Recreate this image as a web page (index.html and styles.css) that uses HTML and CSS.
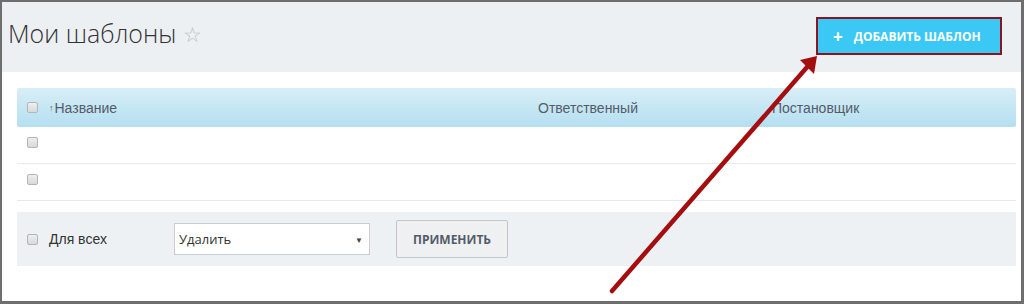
FILE: index.html
```html
<!DOCTYPE html>
<html lang="ru">

<head>
    <meta charset="UTF-8">
    <title>Мои шаблоны</title>
    <link rel="stylesheet" href="styles.css">
</head>

<body>
    <div class="frame">
        <header class="page-header">
            <h1 class="page-title">Мои шаблоны <span class="star">☆</span></h1>
            <button class="add-btn"><span class="plus">+</span>ДОБАВИТЬ ШАБЛОН</button>
        </header>

        <div class="content">
            <div class="grid">
                <div class="grid-head">
                    <div class="col col-name">
                        <input type="checkbox" class="chk">
                        <span class="sort">↑</span>Название
                    </div>
                    <div class="col col-resp">Ответственный</div>
                    <div class="col col-author">Постановщик</div>
                </div>
                <div class="grid-row">
                    <div class="col col-name"><input type="checkbox" class="chk"></div>
                </div>
                <div class="grid-row">
                    <div class="col col-name"><input type="checkbox" class="chk"></div>
                </div>
            </div>

            <div class="actions">
                <label class="for-all"><input type="checkbox" class="chk">Для всех</label>
                <div class="select">
                    <span>Удалить</span>
                    <span class="caret">▼</span>
                </div>
                <button class="apply-btn">ПРИМЕНИТЬ</button>
            </div>
        </div>

        <!-- стрелка поверх страницы -->
        <svg class="arrow" width="1024" height="304" viewBox="0 0 1024 304">
            <line x1="612" y1="291" x2="808" y2="66" stroke="#a50e0e" stroke-width="4.5" stroke-linecap="round" />
            <polygon points="817,56 800,60 814,74" fill="#a50e0e" />
        </svg>
    </div>
</body>

</html>
```

FILE: styles.css
```css
body,
html {
    margin: 0;
    padding: 0;
    background: #ffffff;
}

.frame {
    position: relative;
    width: 1024px;
    height: 304px;
    box-sizing: border-box;
    border: 2px solid #6e6e6e;
    border-right-width: 3px;
    border-bottom-width: 3px;
    overflow: hidden;
    font-family: "Liberation Sans", Arial, sans-serif;
}

.page-header {
    display: flex;
    justify-content: space-between;
    align-items: flex-start;
    height: 70px;
    box-sizing: border-box;
    padding: 11px 19px 0 6px;
    background-color: #edf0f3;
}

.page-title {
    margin: 0;
    font-family: "Open Sans", sans-serif;
    font-weight: 300;
    font-size: 25px;
    line-height: 40px;
    color: #333333;
}

.star {
    font-family: "DejaVu Sans", sans-serif;
    font-size: 21px;
    color: #b9bec2;
    vertical-align: 1px;
}

.add-btn {
    margin-top: 4px;
    width: 186px;
    height: 38px;
    box-sizing: border-box;
    border: 2px solid #8a1422;
    background-color: #3bc8f5;
    color: #ffffff;
    font-family: "Open Sans", sans-serif;
    font-weight: 700;
    font-size: 12px;
    padding: 0 0 0 15px;
    text-align: left;
    cursor: pointer;
}

.plus {
    font-size: 17px;
    font-weight: 700;
    margin-right: 11px;
    vertical-align: -2px;
}

.content {
    padding: 16px 5px 0 15px;
}

.grid-head,
.grid-row {
    display: flex;
    align-items: center;
    font-size: 14px;
    color: #535c69;
}

.grid-head {
    height: 39px;
    border-radius: 2px;
    background: linear-gradient(to bottom, #d8eef7, #b4dff0);
}

.grid-row {
    height: 36px;
    border-bottom: 1px solid #e7e9eb;
}

.col-name {
    display: flex;
    align-items: center;
    width: 521px;
    padding-left: 10px;
    box-sizing: border-box;
}

.col-resp {
    width: 234px;
}

.sort {
    font-size: 9px;
    margin: 0 1px 0 11px;
    vertical-align: 3px;
}

.chk {
    -webkit-appearance: none;
    appearance: none;
    width: 11px;
    height: 11px;
    margin: 0;
    border: 1px solid #b3b6b9;
    border-radius: 2px;
    background: linear-gradient(to bottom, #eeeeee, #d7d9db);
    box-sizing: border-box;
}

.grid-row .chk {
    margin-top: -6px;
}

.actions {
    display: flex;
    align-items: center;
    margin-top: 11px;
    height: 54px;
    padding-left: 10px;
    background-color: #eef1f4;
}

.for-all {
    display: flex;
    align-items: center;
    width: 147px;
    font-size: 14px;
    color: #333333;
}

.for-all .chk {
    margin-right: 11px;
}

.select {
    display: flex;
    justify-content: space-between;
    align-items: center;
    width: 196px;
    height: 32px;
    box-sizing: border-box;
    padding: 0 6px 0 4px;
    border: 1px solid #c9ccd0;
    background-color: #ffffff;
    font-family: "Open Sans", sans-serif;
    font-size: 13px;
    color: #333333;
}

.caret {
    font-size: 8px;
    color: #444444;
}

.apply-btn {
    margin-left: 26px;
    width: 112px;
    height: 38px;
    border: 1px solid #c2c6ca;
    border-radius: 2px;
    background-color: #eef0f2;
    color: #535c69;
    font-family: "Open Sans", sans-serif;
    font-weight: 700;
    font-size: 12px;
}

.arrow {
    position: absolute;
    left: -2px;
    top: -2px;
    pointer-events: none;
}
```
